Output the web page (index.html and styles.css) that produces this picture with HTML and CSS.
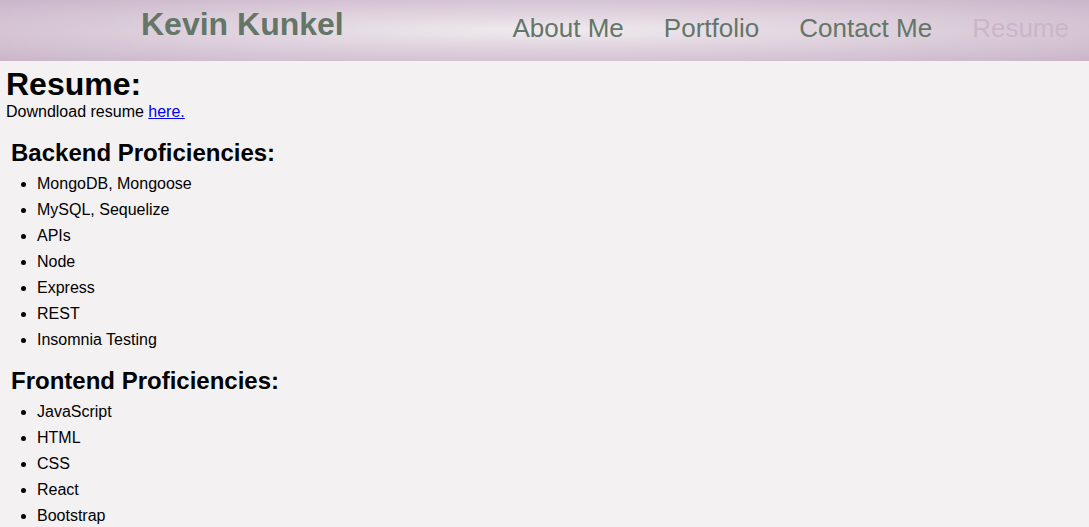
FILE: index.html
```html
<!DOCTYPE html>
<html lang="en">
<head>
<meta charset="utf-8">
<title>Kevin Kunkel - Resume</title>
<link rel="stylesheet" href="styles.css">
</head>
<body>
<header class="site-header">
  <h1 class="brand">Kevin Kunkel</h1>
  <nav class="nav">
    <a class="nav-link" href="#">About Me</a>
    <a class="nav-link" href="#">Portfolio</a>
    <a class="nav-link" href="#">Contact Me</a>
    <a class="nav-link active" href="#">Resume</a>
  </nav>
</header>
<main class="content">
  <h1 class="page-title">Resume:</h1>
  <p class="download">Downdload resume <a href="#">here.</a></p>
  <section class="skills">
    <h2 class="skills-title">Backend Proficiencies:</h2>
    <ul class="skills-list">
      <li>MongoDB, Mongoose</li>
      <li>MySQL, Sequelize</li>
      <li>APIs</li>
      <li>Node</li>
      <li>Express</li>
      <li>REST</li>
      <li>Insomnia Testing</li>
    </ul>
  </section>
  <section class="skills">
    <h2 class="skills-title">Frontend Proficiencies:</h2>
    <ul class="skills-list">
      <li>JavaScript</li>
      <li>HTML</li>
      <li>CSS</li>
      <li>React</li>
      <li>Bootstrap</li>
    </ul>
  </section>
</main>
</body>
</html>
```
FILE: styles.css
```css
html, body {
  margin: 0;
  padding: 0;
}
body {
  background: #f4f1f3;
  font-family: "Liberation Sans", Arial, sans-serif;
  color: #000;
}
.site-header {
  height: 61px;
  box-sizing: border-box;
  display: flex;
  align-items: flex-start;
  justify-content: space-between;
  padding: 6px 20px 0 141px;
  background: radial-gradient(ellipse at 50% 50%, #f0eaef 0%, #e2d6e1 35%, #cab5c9 100%);
}
.brand {
  margin: 0;
  font-size: 32px;
  line-height: 37px;
  font-weight: bold;
  color: #647667;
}
.nav {
  display: flex;
  gap: 40px;
  padding-top: 7px;
}
.nav-link {
  font-size: 26px;
  line-height: 30px;
  color: #647667;
  text-decoration: none;
}
.nav-link.active {
  color: #cbb5c9;
}
.content {
  padding: 0 6px;
}
.page-title {
  margin: 7px 0 0;
  font-size: 32px;
  line-height: 32px;
  font-weight: bold;
}
.download {
  margin: 3px 0 0;
  font-size: 16px;
  line-height: 18px;
}
.download a {
  color: #0000ee;
}
.skills {
  padding-left: 5px;
  margin-top: 18px;
}
.skills + .skills {
  margin-top: 14px;
}
.skills-title {
  margin: 0;
  font-size: 24px;
  line-height: 28px;
  font-weight: bold;
}
.skills-list {
  margin: 4px 0 0;
  padding-left: 26px;
}
.skills-list li {
  font-size: 16px;
  line-height: 26px;
}
```
